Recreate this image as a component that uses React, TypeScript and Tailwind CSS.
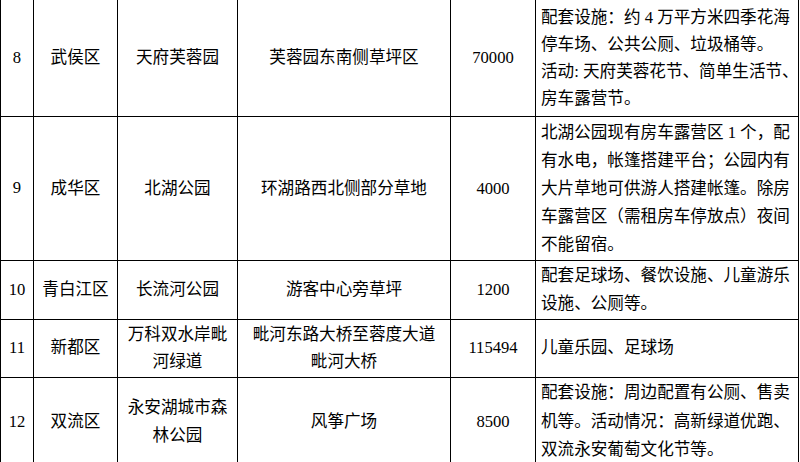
const rows = [
  {
    h: 'h-[116px]',
    lh: 'leading-[27.2px]',
    no: '8',
    district: ['武侯区'],
    park: ['天府芙蓉园'],
    place: ['芙蓉园东南侧草坪区'],
    area: '70000',
    notes: ['配套设施：约 4 万平方米四季花海', '停车场、公共公厕、垃圾桶等。', '活动: 天府芙蓉花节、简单生活节、', '房车露营节。'],
  },
  {
    h: 'h-[143px]',
    lh: 'leading-[28px]',
    no: '9',
    district: ['成华区'],
    park: ['北湖公园'],
    place: ['环湖路西北侧部分草地'],
    area: '4000',
    notes: ['北湖公园现有房车露营区 1 个，配', '有水电，帐篷搭建平台；公园内有', '大片草地可供游人搭建帐篷。除房', '车露营区（需租房车停放点）夜间', '不能留宿。'],
  },
  {
    h: 'h-[58px]',
    lh: 'leading-[27.6px]',
    no: '10',
    district: ['青白江区'],
    park: ['长流河公园'],
    place: ['游客中心旁草坪'],
    area: '1200',
    notes: ['配套足球场、餐饮设施、儿童游乐', '设施、公厕等。'],
  },
  {
    h: 'h-[57px]',
    lh: 'leading-[26.6px]',
    no: '11',
    district: ['新都区'],
    park: ['万科双水岸毗', '河绿道'],
    place: ['毗河东路大桥至蓉度大道', '毗河大桥'],
    area: '115494',
    notes: ['儿童乐园、足球场'],
  },
  {
    h: 'h-[88px]',
    lh: 'leading-[28.5px]',
    no: '12',
    district: ['双流区'],
    park: ['永安湖城市森', '林公园'],
    place: ['风筝广场'],
    area: '8500',
    notes: ['配套设施：周边配置有公厕、售卖', '机等。活动情况：高新绿道优跑、', '双流永安葡萄文化节等。'],
  },
]

function Cell({ lines, lh, left }: { lines: string[]; lh: string; left?: boolean }) {
  return (
    <div className={`bg-white flex items-center ${left ? 'justify-start pl-[5px]' : 'justify-center text-center'}`}>
      <div className={lh}>
        {lines.map((l, i) => (
          <div key={i} className="whitespace-nowrap">{l}</div>
        ))}
      </div>
    </div>
  )
}

export default function App() {
  return (
    <div className="w-[800px] h-[462px] overflow-hidden bg-white">
      <div
        className="-mt-px w-[799px] bg-black border border-black text-black text-[16.6px] grid grid-cols-[32px_83px_119px_212px_84px_262px] gap-px"
        style={{ fontFamily: '"Liberation Serif", "Noto Sans CJK SC", serif' }}
      >
        {rows.map((r) => (
          <div key={r.no} className={`contents`}>
            <div className={`${r.h} bg-white flex items-center justify-center`}>{r.no}</div>
            <Cell lines={r.district} lh={r.lh} />
            <Cell lines={r.park} lh={r.lh} />
            <Cell lines={r.place} lh={r.lh} />
            <Cell lines={[r.area]} lh={r.lh} />
            <Cell lines={r.notes} lh={r.lh} left />
          </div>
        ))}
      </div>
    </div>
  )
}
